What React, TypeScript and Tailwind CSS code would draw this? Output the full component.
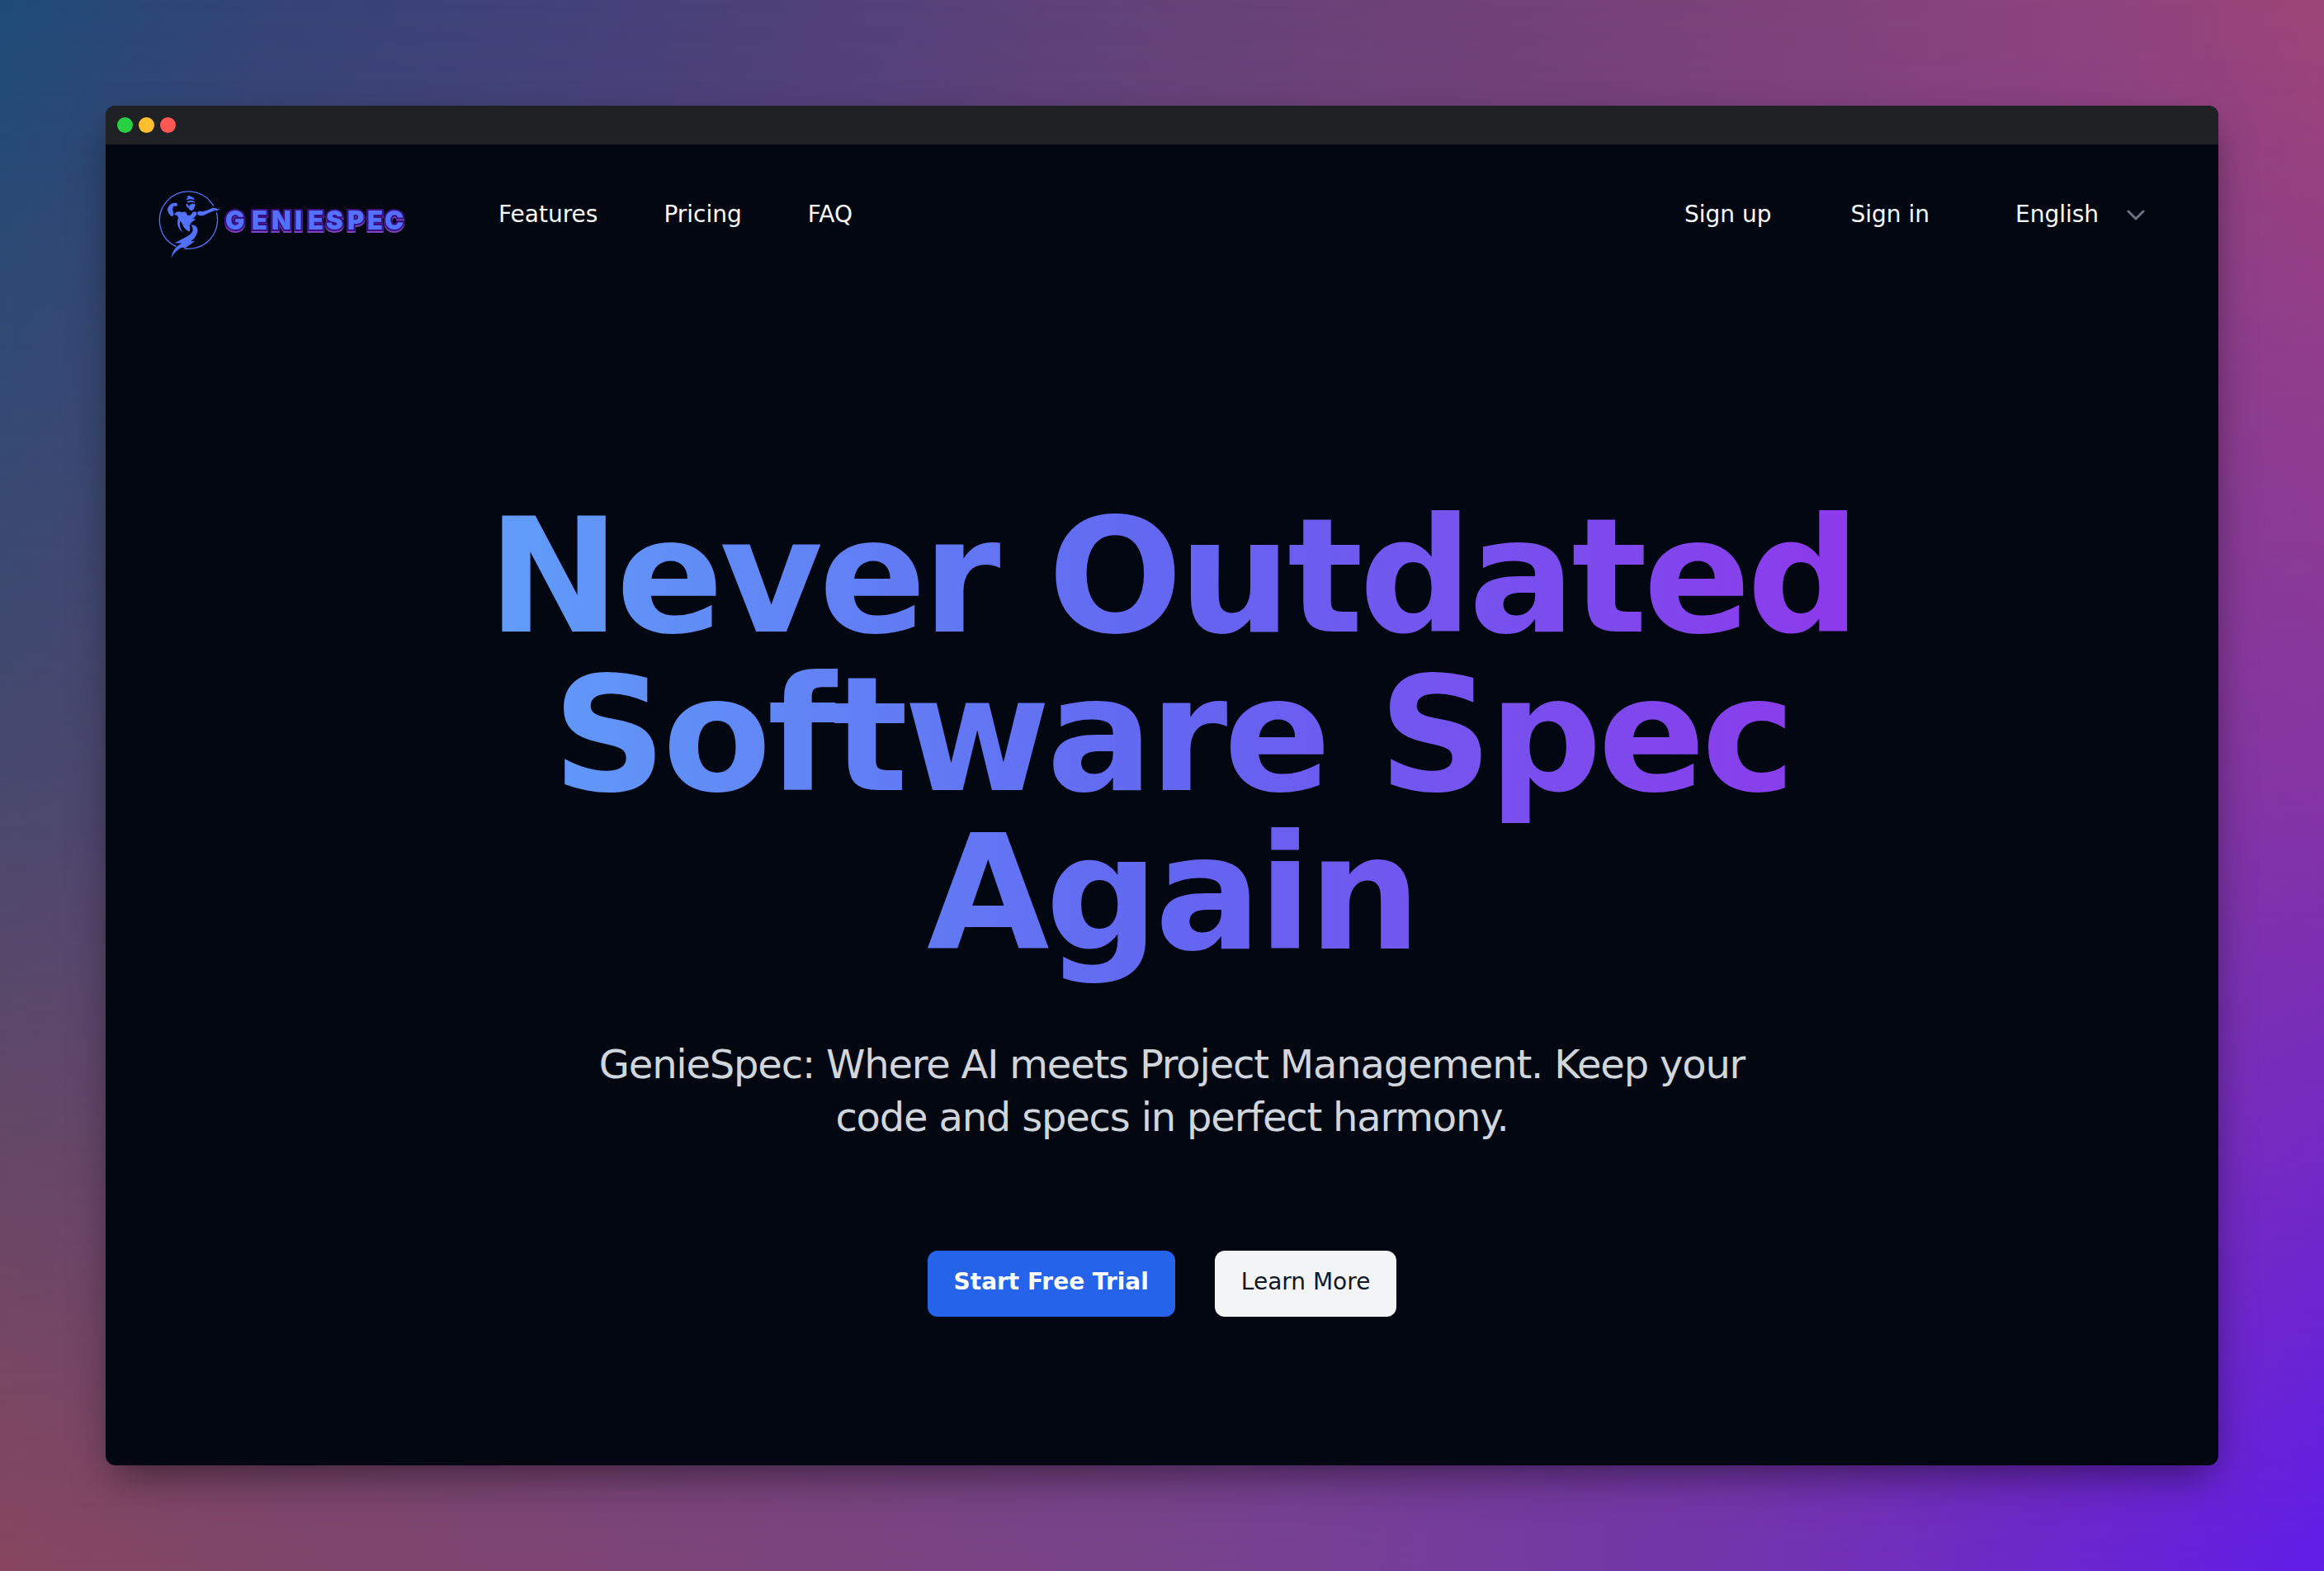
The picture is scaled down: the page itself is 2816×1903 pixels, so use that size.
import React from "react";

const navLinks = ["Features", "Pricing", "FAQ"];

function GenieMark() {
  return (
    <svg viewBox="0 0 300 300" className="h-[100px] w-[100px] shrink-0" aria-hidden="true">
      <g fill="none" stroke="#4f74f8" strokeWidth="4">
        <path d="M236 88 A105 105 0 1 0 101 236" />
        <path d="M130 243 A105 105 0 0 0 247 112" />
      </g>
      <g fill="#5271ff">
        <path d="M138 57 Q144 50 151 51 Q149 54 155 55 Q165 57 167 67 Q152 60 137 68 Q138 61 145 58 Z" />
        <path d="M140 72 Q155 65 167 73 L168 77 Q154 72 143 77 Z" />
        <path d="M136 81 L142 82 L147 90 Q151 82 158 80 L169 81 Q171 89 167 93 Q165 103 155 106 L146 99 L145 95 L139 92 Z" />
        <path d="M68 101 Q73 84 88 78 Q100 75 105 80 L104 88 Q96 91 92 88 Q87 96 88 106 Q93 113 90 123 Q84 128 80 124 Q70 112 68 101 Z" />
        <path d="M93 120 Q100 107 113 109 Q119 113 126 110 Q133 108 138 114 Q138 121 145 124 Q156 122 160 112 Q170 104 176 114 Q173 129 158 136 Q168 134 171 138 Q154 146 149 160 Q153 170 149 182 Q134 176 126 162 Q121 146 114 144 Q111 165 124 184 Q105 170 105 149 Q105 138 109 130 Q102 120 93 120 Z" />
        <path d="M178 111 Q187 104 196 109 Q216 105 233 95 Q248 94 262 103 L248 103 L254 108 L240 104 Q224 112 201 122 Q186 127 178 119 Z" />
        <path d="M154 157 Q177 157 179 178 Q177 192 166 206 L154 217 L168 217 L135 240 L119 240 Q96 252 82 277 Q86 251 108 232 L121 224 L94 223 Q115 213 132 203 Q160 190 161 176 Q162 165 154 157 Z" />
      </g>
    </svg>
  );
}

function Logo() {
  return (
    <a href="#home" aria-label="GenieSpec" className="flex h-[100px] w-[326px] items-center">
      <GenieMark />
      <svg viewBox="0 0 226 60" className="-ml-2 h-[60px] w-[226px] shrink-0 overflow-visible drop-shadow-[0_2px_0_#7c45bd]" aria-hidden="true">
        <text
          x="1 33 57 85 101 123 149 173 194"
          y="38"
          fontFamily="Inter, sans-serif"
          fontWeight="900"
          fontSize="31"
          fill="#5271ff"
          stroke="#3a0f80"
          strokeWidth="4"
          paintOrder="stroke"
        >
          GENIESPEC
        </text>
      </svg>
    </a>
  );
}

function Header() {
  return (
    <header className="flex items-start justify-between pl-[52px] pr-20 pt-[45px] text-[28px] leading-10 text-gray-50">
      <div className="flex items-start">
        <Logo />
        <nav className="flex gap-20 pl-[98px] pt-5">
          {navLinks.map((label) => (
            <a key={label} href={"#" + label.toLowerCase()}>
              {label}
            </a>
          ))}
        </nav>
      </div>
      <div className="flex items-center pt-5">
        <a href="#sign-up">Sign up</a>
        <a href="#sign-in" className="ml-24">Sign in</a>
        <div className="relative ml-[104px]">
          <select aria-label="Language" className="w-[166px] appearance-none bg-transparent pr-12 leading-10 outline-none">
            <option>English</option>
          </select>
          <svg viewBox="0 0 24 24" fill="none" stroke="#6b7280" strokeWidth="3" strokeLinecap="round" strokeLinejoin="round" className="pointer-events-none absolute right-2 top-2 size-6" aria-hidden="true">
            <path d="M3 8l9 9 9-9" />
          </svg>
        </div>
      </div>
    </header>
  );
}

function Hero() {
  return (
    <main className="flex flex-1 flex-col items-center pt-[283px]">
      <div className="flex w-full flex-col items-center pl-6 text-center">
        <h1 className="w-full max-w-[1880px] bg-[linear-gradient(to_right,#60a5fa,#6366f1,#9333ea)] bg-clip-text px-24 pb-4 text-[192px] font-bold leading-[192px] tracking-tight text-transparent">
          Never Outdated Software Spec Again
        </h1>
        <p className="mt-[62px] max-w-[1500px] text-5xl leading-[64px] tracking-tight text-gray-300">
          GenieSpec: Where AI meets Project Management. Keep your code and specs in perfect harmony.
        </p>
      </div>
      <div className="mt-[130px] flex gap-12 text-[28px] leading-10">
        <button type="button" className="h-20 rounded-xl bg-[#2563eb] px-8 pb-1 font-bold text-white">
          Start Free Trial
        </button>
        <button type="button" className="h-20 rounded-xl bg-gray-100 px-8 pb-1 text-gray-900">
          Learn More
        </button>
      </div>
    </main>
  );
}

export default function App() {
  return (
    <div className="relative isolate min-h-screen bg-[linear-gradient(to_right,#1e4b78_0%,#354477_12%,#46417a_27%,#644278_50%,#7c427a_75%,#8e447e_90%,#9d4577_100%)] p-32 font-['DejaVu_Sans',sans-serif]">
      <div className="absolute inset-0 -z-10 bg-[linear-gradient(to_right,#88465f_0%,#80466a_12%,#78438b_50%,#7335ad_75%,#6a25d0_90%,#601de8_100%)] mask-[linear-gradient(to_bottom,transparent,rgba(0,0,0,0.4)_50%,black)]" />
      <div className="flex min-h-[calc(100vh-256px)] flex-col overflow-hidden rounded-xl bg-[#030711] shadow-[0_20px_50px_-10px_rgba(0,0,0,0.5)]">
        <div className="flex h-[47px] items-center gap-[7px] bg-[#202124] px-3.5">
          <span className="size-[19px] rounded-full bg-[#28d043]" />
          <span className="size-[19px] rounded-full bg-[#ffbf2f]" />
          <span className="size-[19px] rounded-full bg-[#ff5752]" />
        </div>
        <Header />
        <Hero />
      </div>
    </div>
  );
}
